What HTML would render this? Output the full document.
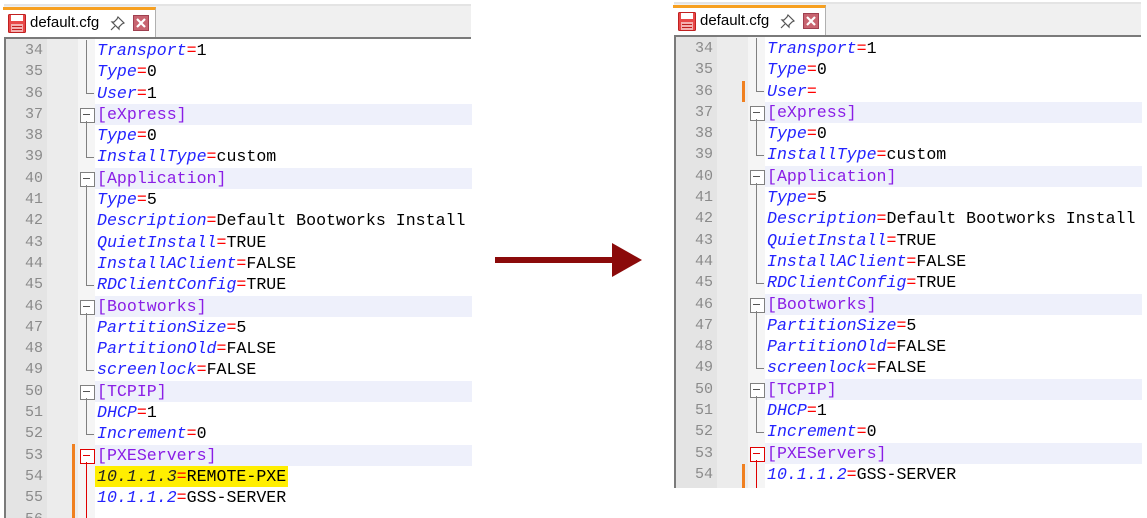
<!DOCTYPE html>
<html><head><meta charset="utf-8"><style>
*{margin:0;padding:0;box-sizing:border-box}
html,body{width:1147px;height:518px;overflow:hidden}
body{background:#fff;position:relative;font-family:"Liberation Mono",monospace}
.p{position:absolute;top:0;width:472px;overflow:hidden}
.tb{position:absolute;left:4px;top:4px;width:467px;height:34px;background:#f0f0f0;border-top:2px solid #e4e4e4}
.tab{position:absolute;left:3px;top:7px;width:153px;height:31px;background:#fff;border-top:3px solid #f7a020;border-right:1px solid #b0b0b0}
.tab .nm{position:absolute;left:27px;top:4px;font:15px "Liberation Sans",sans-serif;color:#000}
.bl{position:absolute;left:4px;top:37px;width:467px;height:2px;background:#7a7a7a}
.lb{position:absolute;left:4px;top:37px;width:2px;height:600px;background:#7a7a7a}
.g1{position:absolute;left:6px;top:39px;width:41px;height:600px;background:#e4e4e4}
.g2{position:absolute;left:47px;top:39px;width:31px;height:600px;background:#ececec}
.g3{position:absolute;left:78px;top:39px;width:17px;height:600px;background:#f5f5f5}
.rows{position:absolute;left:0;top:40px;width:472px}
.r{position:relative;height:21.3px;z-index:0}
.r .n{position:absolute;left:6px;width:37px;text-align:right;font-size:15px;color:#8a8a8a;line-height:21.3px;font-style:normal}
.r .t{position:absolute;left:97px;font-size:16.6px;line-height:21.3px;white-space:pre;color:#000}
.h::after{content:"";position:absolute;left:95px;right:0;top:0;bottom:0;background:#eef0fb;z-index:-1}
.k{color:#2323ff;font-style:italic}
.e{color:#ff0000}
.r .s{color:#8a1ee6}
.f{position:absolute;left:78px;top:0;width:17px;height:100%}
.v::before{content:"";position:absolute;left:8px;top:0;height:100%;width:1px;background:#808080}
.en::before{content:"";position:absolute;left:8px;top:0;height:50%;width:1px;background:#808080}
.en::after{content:"";position:absolute;left:8px;top:50%;width:8px;height:1px;background:#808080}
.hd::before{content:"";position:absolute;left:2px;top:4px;width:13px;height:13px;border:1px solid #808080;background:#fff}
.hd::after{content:"";position:absolute;left:5px;top:10px;width:7px;height:1px;background:#555}
.hd i{position:absolute;left:8px;top:17px;bottom:0;width:1px;background:#808080}
.hr::before{border-color:#e00000}
.hr::after{background:#e00000}
.hr i{background:#e00000}
.rv::before{content:"";position:absolute;left:8px;top:0;height:100%;width:1px;background:#e00000}
.ob{position:absolute;left:72px;width:3px;background:#f08020}
.hl{background:#ffee00;color:#000}
.hl .k{color:#222}
</style></head><body>

<div class="p" style="left:0;height:518px">
  <div class="tb"></div>
  <div class="tab">
    <svg style="position:absolute;left:5px;top:4px" width="18" height="19" viewBox="0 0 18 19"><rect x="0.5" y="0.5" width="17" height="18" rx="1" fill="#e84848" stroke="#c02020"/><rect x="3" y="1" width="12" height="6" fill="#fff"/><rect x="3" y="10" width="12" height="8" fill="#f4b0b0"/><rect x="4" y="12" width="10" height="1" fill="#c02020"/><rect x="4" y="15" width="10" height="1" fill="#c02020"/></svg>
    <span class="nm">default.cfg</span>
    <svg style="position:absolute;left:107px;top:6px" width="15" height="15" viewBox="0 0 15 15"><path d="M8 1 L14 7 L12 8 L9 11 L9 13 L2 6 L4 6 L7 3 Z M5 10 L1 14" fill="none" stroke="#555" stroke-width="1.2"/></svg>
    <svg style="position:absolute;left:130px;top:5px" width="16" height="16" viewBox="0 0 16 16"><rect x="0.5" y="0.5" width="15" height="15" fill="#c86470" stroke="#a04050"/><path d="M4 4 L12 12 M12 4 L4 12" stroke="#fff" stroke-width="2.2"/></svg>
  </div>
  <div class="bl"></div><div class="lb"></div>
  <div class="g1"></div><div class="g2"></div><div class="g3"></div>
  <div class="ob" style="top:444px;height:80px"></div>
  <div class="rows">
    <div class="r"><i class="n">34</i><b class="f v"></b><span class="t"><span class="k">Transport</span><span class="e">=</span>1</span></div>
    <div class="r"><i class="n">35</i><b class="f v"></b><span class="t"><span class="k">Type</span><span class="e">=</span>0</span></div>
    <div class="r"><i class="n">36</i><b class="f en"></b><span class="t"><span class="k">User</span><span class="e">=</span>1</span></div>
    <div class="r h"><i class="n">37</i><b class="f hd"><i></i></b><span class="t s">[eXpress]</span></div>
    <div class="r"><i class="n">38</i><b class="f v"></b><span class="t"><span class="k">Type</span><span class="e">=</span>0</span></div>
    <div class="r"><i class="n">39</i><b class="f en"></b><span class="t"><span class="k">InstallType</span><span class="e">=</span>custom</span></div>
    <div class="r h"><i class="n">40</i><b class="f hd"><i></i></b><span class="t s">[Application]</span></div>
    <div class="r"><i class="n">41</i><b class="f v"></b><span class="t"><span class="k">Type</span><span class="e">=</span>5</span></div>
    <div class="r"><i class="n">42</i><b class="f v"></b><span class="t"><span class="k">Description</span><span class="e">=</span>Default Bootworks Install</span></div>
    <div class="r"><i class="n">43</i><b class="f v"></b><span class="t"><span class="k">QuietInstall</span><span class="e">=</span>TRUE</span></div>
    <div class="r"><i class="n">44</i><b class="f v"></b><span class="t"><span class="k">InstallAClient</span><span class="e">=</span>FALSE</span></div>
    <div class="r"><i class="n">45</i><b class="f en"></b><span class="t"><span class="k">RDClientConfig</span><span class="e">=</span>TRUE</span></div>
    <div class="r h"><i class="n">46</i><b class="f hd"><i></i></b><span class="t s">[Bootworks]</span></div>
    <div class="r"><i class="n">47</i><b class="f v"></b><span class="t"><span class="k">PartitionSize</span><span class="e">=</span>5</span></div>
    <div class="r"><i class="n">48</i><b class="f v"></b><span class="t"><span class="k">PartitionOld</span><span class="e">=</span>FALSE</span></div>
    <div class="r"><i class="n">49</i><b class="f en"></b><span class="t"><span class="k">screenlock</span><span class="e">=</span>FALSE</span></div>
    <div class="r h"><i class="n">50</i><b class="f hd"><i></i></b><span class="t s">[TCPIP]</span></div>
    <div class="r"><i class="n">51</i><b class="f v"></b><span class="t"><span class="k">DHCP</span><span class="e">=</span>1</span></div>
    <div class="r"><i class="n">52</i><b class="f en"></b><span class="t"><span class="k">Increment</span><span class="e">=</span>0</span></div>
    <div class="r h"><i class="n">53</i><b class="f hd hr"><i></i></b><span class="t s">[PXEServers]</span></div>
    <div class="r"><i class="n">54</i><b class="f rv"></b><span class="t hl" style="left:95px;padding:0 2px"><span class="k">10.1.1.3</span><span class="e">=</span>REMOTE-PXE</span></div>
    <div class="r"><i class="n">55</i><b class="f rv"></b><span class="t"><span class="k">10.1.1.2</span><span class="e">=</span>GSS-SERVER</span></div>
    <div class="r"><i class="n">56</i><b class="f rv"></b></div>
  </div>
</div>

<svg style="position:absolute;left:490px;top:235px" width="160" height="50" viewBox="0 0 160 50"><rect x="5" y="22" width="120" height="6" fill="#8b0a0a"/><path d="M122 8 L152 25 L122 42 Z" fill="#8b0a0a"/></svg>

<div class="p" style="left:670px;top:-2px;height:490px">
  <div class="tb"></div>
  <div class="tab">
    <svg style="position:absolute;left:5px;top:4px" width="18" height="19" viewBox="0 0 18 19"><rect x="0.5" y="0.5" width="17" height="18" rx="1" fill="#e84848" stroke="#c02020"/><rect x="3" y="1" width="12" height="6" fill="#fff"/><rect x="3" y="10" width="12" height="8" fill="#f4b0b0"/><rect x="4" y="12" width="10" height="1" fill="#c02020"/><rect x="4" y="15" width="10" height="1" fill="#c02020"/></svg>
    <span class="nm">default.cfg</span>
    <svg style="position:absolute;left:107px;top:6px" width="15" height="15" viewBox="0 0 15 15"><path d="M8 1 L14 7 L12 8 L9 11 L9 13 L2 6 L4 6 L7 3 Z M5 10 L1 14" fill="none" stroke="#555" stroke-width="1.2"/></svg>
    <svg style="position:absolute;left:130px;top:5px" width="16" height="16" viewBox="0 0 16 16"><rect x="0.5" y="0.5" width="15" height="15" fill="#c86470" stroke="#a04050"/><path d="M4 4 L12 12 M12 4 L4 12" stroke="#fff" stroke-width="2.2"/></svg>
  </div>
  <div class="bl"></div><div class="lb"></div>
  <div class="g1"></div><div class="g2"></div><div class="g3"></div>
  <div class="ob" style="top:83px;height:21px"></div>
  <div class="ob" style="top:466px;height:30px"></div>
  <div class="rows">
    <div class="r"><i class="n">34</i><b class="f v"></b><span class="t"><span class="k">Transport</span><span class="e">=</span>1</span></div>
    <div class="r"><i class="n">35</i><b class="f v"></b><span class="t"><span class="k">Type</span><span class="e">=</span>0</span></div>
    <div class="r"><i class="n">36</i><b class="f en"></b><span class="t"><span class="k">User</span><span class="e">=</span></span></div>
    <div class="r h"><i class="n">37</i><b class="f hd"><i></i></b><span class="t s">[eXpress]</span></div>
    <div class="r"><i class="n">38</i><b class="f v"></b><span class="t"><span class="k">Type</span><span class="e">=</span>0</span></div>
    <div class="r"><i class="n">39</i><b class="f en"></b><span class="t"><span class="k">InstallType</span><span class="e">=</span>custom</span></div>
    <div class="r h"><i class="n">40</i><b class="f hd"><i></i></b><span class="t s">[Application]</span></div>
    <div class="r"><i class="n">41</i><b class="f v"></b><span class="t"><span class="k">Type</span><span class="e">=</span>5</span></div>
    <div class="r"><i class="n">42</i><b class="f v"></b><span class="t"><span class="k">Description</span><span class="e">=</span>Default Bootworks Install</span></div>
    <div class="r"><i class="n">43</i><b class="f v"></b><span class="t"><span class="k">QuietInstall</span><span class="e">=</span>TRUE</span></div>
    <div class="r"><i class="n">44</i><b class="f v"></b><span class="t"><span class="k">InstallAClient</span><span class="e">=</span>FALSE</span></div>
    <div class="r"><i class="n">45</i><b class="f en"></b><span class="t"><span class="k">RDClientConfig</span><span class="e">=</span>TRUE</span></div>
    <div class="r h"><i class="n">46</i><b class="f hd"><i></i></b><span class="t s">[Bootworks]</span></div>
    <div class="r"><i class="n">47</i><b class="f v"></b><span class="t"><span class="k">PartitionSize</span><span class="e">=</span>5</span></div>
    <div class="r"><i class="n">48</i><b class="f v"></b><span class="t"><span class="k">PartitionOld</span><span class="e">=</span>FALSE</span></div>
    <div class="r"><i class="n">49</i><b class="f en"></b><span class="t"><span class="k">screenlock</span><span class="e">=</span>FALSE</span></div>
    <div class="r h"><i class="n">50</i><b class="f hd"><i></i></b><span class="t s">[TCPIP]</span></div>
    <div class="r"><i class="n">51</i><b class="f v"></b><span class="t"><span class="k">DHCP</span><span class="e">=</span>1</span></div>
    <div class="r"><i class="n">52</i><b class="f en"></b><span class="t"><span class="k">Increment</span><span class="e">=</span>0</span></div>
    <div class="r h"><i class="n">53</i><b class="f hd hr"><i></i></b><span class="t s">[PXEServers]</span></div>
    <div class="r"><i class="n">54</i><b class="f rv"></b><span class="t"><span class="k">10.1.1.2</span><span class="e">=</span>GSS-SERVER</span></div>
    <div class="r"><i class="n"></i><b class="f rv"></b></div>
  </div>
</div>
</body></html>
